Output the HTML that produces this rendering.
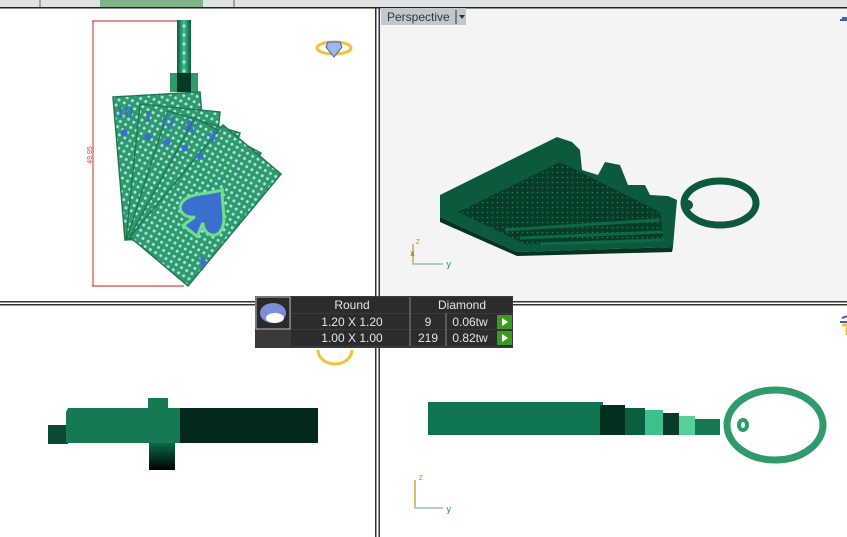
<!DOCTYPE html>
<html><head><meta charset="utf-8"><style>
html,body{margin:0;padding:0;width:847px;height:537px;overflow:hidden;background:#fff;font-family:"Liberation Sans","DejaVu Sans",sans-serif}
svg{display:block}
</style></head><body>
<svg width="847" height="537" viewBox="0 0 847 537" xmlns="http://www.w3.org/2000/svg">
<defs>
<pattern id="dots" width="6" height="6" patternUnits="userSpaceOnUse" patternTransform="rotate(30)">
<rect width="6" height="6" fill="#2f9a6a"/><circle cx="3" cy="3" r="1.5" fill="#a9e4ea"/></pattern>
<pattern id="pd" width="5" height="5" patternUnits="userSpaceOnUse"><rect width="5" height="5" fill="#063d29"/><circle cx="2.5" cy="2.5" r="0.8" fill="#2a7a58"/></pattern>
<linearGradient id="stem" x1="0" y1="0" x2="0" y2="1"><stop offset="0" stop-color="#0a6b45"/><stop offset="1" stop-color="#000"/></linearGradient>
<linearGradient id="bail" x1="0" y1="0" x2="1" y2="0"><stop offset="0" stop-color="#0b5a3b"/><stop offset=".5" stop-color="#3fbf8c"/><stop offset="1" stop-color="#0b5a3b"/></linearGradient>
</defs>
<rect x="0" y="0" width="847" height="7" fill="#dfe3e6"/>
<rect x="100" y="0" width="103" height="7" fill="#7fb48a"/>
<line x1="40" y1="0" x2="40" y2="7" stroke="#666"/>
<line x1="234" y1="0" x2="234" y2="7" stroke="#666"/>
<rect x="0" y="7" width="847" height="1.5" fill="#222"/>
<rect x="379" y="9" width="468" height="293" fill="#f4f4f4"/>
<rect x="381" y="8" width="85" height="17" fill="#bfc8d0"/>
<text x="387" y="21" font-size="12" fill="#333">Perspective</text>
<line x1="456" y1="10" x2="456" y2="24" stroke="#333"/>
<path d="M459 15 L465 15 L462 19 Z" fill="#333"/>
<rect x="375" y="8" width="1.5" height="529" fill="#333"/>
<rect x="378.5" y="8" width="1.5" height="529" fill="#333"/>
<rect x="0" y="301" width="847" height="1.5" fill="#333"/>
<rect x="0" y="304" width="847" height="1.5" fill="#333"/>
<g transform="translate(334,48)"><ellipse cx="0" cy="0" rx="17" ry="6" fill="none" stroke="#f2c23a" stroke-width="3"/><path d="M-6 -6 L6 -6 L8 -1 L0 9 L-8 -1 Z" fill="#9fb8e8" stroke="#3a5fb0"/></g>
<path d="M840 20 l8 0 M842 18 l6 0" stroke="#3a5fb0" stroke-width="2"/>
<path d="M842 318 l6 -2 M840 322 l8 0" stroke="#3a5fb0" stroke-width="2"/>
<path d="M842 325 l5 0 l0 10" stroke="#f2c23a" stroke-width="3" fill="none"/>
<path d="M318 350 a17 14 0 0 0 34 0" stroke="#f2c23a" stroke-width="3" fill="none"/>
<g stroke="#d44" stroke-width="1.2"><line x1="92" y1="21" x2="182" y2="21"/><line x1="92" y1="286" x2="184" y2="286"/><line x1="93" y1="21" x2="93" y2="286"/></g>
<text x="92" y="155" font-size="7" fill="#d44" transform="rotate(-90 92 155)" text-anchor="middle">49.95</text>
<rect x="177" y="20" width="14" height="62" fill="url(#bail)"/>
<g fill="#a9e4ea"><circle cx="184" cy="26" r="1.6"/><circle cx="184" cy="35" r="1.6"/><circle cx="184" cy="44" r="1.6"/><circle cx="184" cy="53" r="1.6"/><circle cx="184" cy="62" r="1.6"/><circle cx="184" cy="71" r="1.6"/></g>
<rect x="170" y="73" width="28" height="19" fill="#2f9a6a"/><rect x="177" y="73" width="14" height="19" fill="#053b26"/>
<g stroke="#1f7a52" stroke-width="1.5">
<polygon points="113,97 200,92 212,235 125,240" fill="url(#dots)"/>
<polygon points="140,104 220,112 206,248 126,239" fill="url(#dots)"/>
<polygon points="168,111 240,133 200,260 127,238" fill="url(#dots)"/>
<polygon points="195,118 261,153 194,273 129,238" fill="url(#dots)"/>
<polygon points="223,125 281,174 188,286 130,237" fill="url(#dots)"/>
</g>
<g fill="#3a6fcf" font-family="Liberation Serif,serif" font-weight="bold" font-size="17">
<text x="116" y="117">10</text><text x="143" y="122">J</text><text x="162" y="126" transform="rotate(15 168 120)">Q</text><text x="185" y="132" transform="rotate(25 190 126)">K</text><text x="206" y="141" transform="rotate(35 212 135)">A</text>
</g>
<g fill="#3a6fcf"><circle cx="124" cy="133" r="3.5"/><circle cx="148" cy="137" r="3.5"/><circle cx="167" cy="142" r="3.5"/><circle cx="185" cy="148" r="3.5"/><circle cx="200" cy="156" r="3.5"/></g>
<g transform="translate(205,212) rotate(38)">
<path d="M0 -28 C10 -14 24 -6 24 6 C24 16 12 18 5 10 L9 24 L-9 24 L-5 10 C-12 18 -24 16 -24 6 C-24 -6 -10 -14 0 -28 Z" fill="#3a6fcf" stroke="#6fe08a" stroke-width="3"/>
</g>
<path d="M200 255 l8 8 l-6 8 z" fill="#3a6fcf"/>
<!-- perspective object -->
<path d="M440 195 L557 137 L572 142 L580 150 L582 170 L598 175 L605 162 L620 165 L628 185 L645 185 L650 195 L668 196 L677 200 L673 247 L517 252 L440 217 Z" fill="#0b5a3b"/>
<path d="M458 212 L560 162 L660 212 L664 242 L525 244 Z" fill="url(#pd)"/>
<path d="M440 217 L517 252 L673 247 L672 252 L517 256 L440 222 Z" fill="#043522"/>
<path d="M505 230 L660 220 M520 238 L662 232 M540 244 L664 240" stroke="#0d6a45" stroke-width="3"/>
<ellipse cx="720" cy="203" rx="36" ry="22" fill="none" stroke="#0b5a3b" stroke-width="7"/>
<circle cx="688" cy="205" r="5" fill="#0b5a3b"/>
<g font-size="9" font-family="DejaVu Sans Mono,monospace">
<path d="M413 244 L413 264 L443 264" stroke="#9bb" stroke-width="1.5" fill="none"/><path d="M413 244 L413 262" stroke="#e0b040" stroke-width="1.5"/>
<text x="415" y="244" fill="#d0a030">z</text><text x="446" y="267" fill="#2a8a9a">y</text><text x="410" y="256" fill="#a33" font-size="8">x</text>
<path d="M415 480 L415 508 L443 508" stroke="#9bb" stroke-width="1.5" fill="none"/><path d="M415 480 L415 506" stroke="#e0b040" stroke-width="1.5"/>
<text x="418" y="480" fill="#d0a030">z</text><text x="446" y="512" fill="#2a8a9a">y</text>
</g>
<rect x="48" y="425" width="20" height="19" fill="#0a4a33"/>
<path d="M66 412 L68 408 L190 408 L190 443 L66 443 Z" fill="#157a52"/>
<rect x="180" y="408" width="138" height="35" fill="#02291b"/>
<rect x="148" y="398" width="20" height="10" fill="#157a52"/>
<rect x="149" y="443" width="26" height="27" fill="url(#stem)"/>
<rect x="428" y="402" width="175" height="33" fill="#0f7550"/>
<rect x="600" y="405" width="25" height="30" fill="#02301f"/>
<rect x="625" y="408" width="20" height="27" fill="#0c5e40"/>
<rect x="645" y="410" width="18" height="25" fill="#3fbf8c"/>
<rect x="663" y="413" width="16" height="22" fill="#0a3b28"/>
<rect x="679" y="416" width="16" height="19" fill="#55d09a"/>
<rect x="695" y="419" width="25" height="16" fill="#147a52"/>
<ellipse cx="775" cy="425" rx="48" ry="35" fill="none" stroke="#2f9a6a" stroke-width="7"/>
<ellipse cx="743" cy="425" rx="6" ry="7" fill="#2f9a6a"/><ellipse cx="743" cy="425" rx="2" ry="3" fill="#fff"/>
<rect x="255" y="296" width="258" height="52" fill="#3a3a3a"/>
<rect x="256" y="297" width="34" height="32" fill="#2a2a2a" stroke="#bbb"/>
<ellipse cx="273" cy="313" rx="13" ry="10" fill="#7a8fd8"/><ellipse cx="275" cy="318" rx="9" ry="5" fill="#fff"/>
<rect x="291" y="297" width="221" height="16" fill="#2c2c2c"/>
<rect x="291" y="314" width="221" height="15" fill="#2c2c2c"/>
<rect x="291" y="330" width="221" height="16" fill="#2c2c2c"/>
<g stroke="#888" stroke-width="1"><line x1="410" y1="297" x2="410" y2="346"/><line x1="446" y1="313" x2="446" y2="346"/></g>
<g fill="#e6e6e6" font-size="12" text-anchor="middle">
<text x="352" y="309">Round</text><text x="462" y="309">Diamond</text>
<text x="352" y="326">1.20 X 1.20</text><text x="428" y="326">9</text><text x="470" y="326">0.06tw</text>
<text x="352" y="342">1.00 X 1.00</text><text x="428" y="342">219</text><text x="470" y="342">0.82tw</text>
</g>
<rect x="497" y="315" width="15" height="14" fill="#3a9a22"/><path d="M502 318 L508 322 L502 326 Z" fill="#fff"/>
<rect x="497" y="331" width="15" height="14" fill="#3a9a22"/><path d="M502 334 L508 338 L502 342 Z" fill="#fff"/>
</svg>
</body></html>
